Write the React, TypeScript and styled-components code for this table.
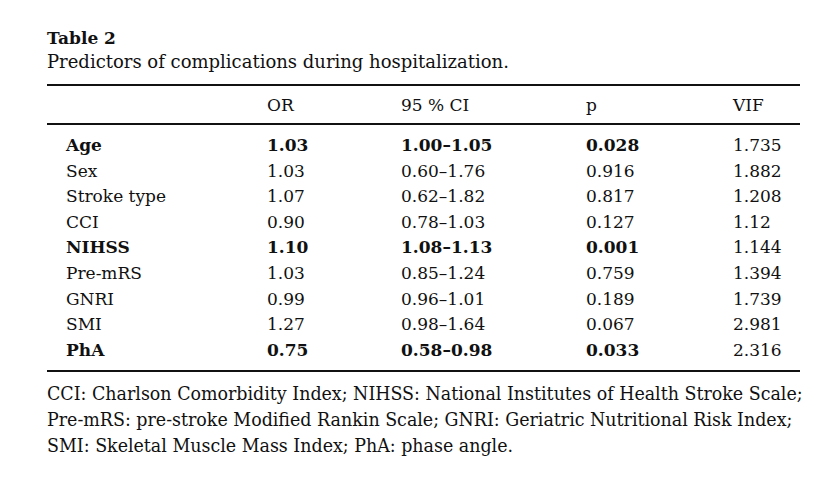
import React from "react";
import styled, { createGlobalStyle } from "styled-components";

const GlobalStyle = createGlobalStyle`
  html, body {
    margin: 0;
    padding: 0;
    background: #ffffff;
  }
  body {
    font-family: "DejaVu Serif", "Liberation Serif", serif;
    color: #111111;
  }
`;

const Page = styled.div`
  width: 814px;
  height: 487px;
  box-sizing: border-box;
  padding: 28px 14px 0 47px;
`;

const Title = styled.div`
  font-weight: bold;
  font-size: 17px;
  line-height: 21px;
`;

const Caption = styled.div`
  font-size: 18px;
  line-height: 26px;
  margin-bottom: 9px;
`;

const Table = styled.table`
  width: 753px;
  border-collapse: collapse;
  font-size: 17px;
  border-top: 2px solid #111;
  border-bottom: 2px solid #111;
`;

const HeadRow = styled.tr`
  border-bottom: 2px solid #111;
  th {
    height: 37px;
    font-weight: normal;
    text-align: left;
    padding: 0;
  }
`;

const Body = styled.tbody`
  tr:first-child td {
    padding-top: 8px;
  }
  tr:last-child td {
    padding-bottom: 7px;
  }
`;

const Cell = styled.td<{ $bold?: boolean }>`
  padding: 0;
  height: 25.6px;
  line-height: 25.6px;
  font-weight: ${(p) => (p.$bold ? "bold" : "normal")};
  white-space: nowrap;
`;

const Notes = styled.div`
  margin-top: 9px;
  font-family: "DejaVu Serif Condensed", "DejaVu Serif", serif;
  font-stretch: condensed;
  font-size: 19.4px;
  line-height: 26px;
  white-space: nowrap;
`;

const cols = ["19px", "201px", "134px", "185px", "147px", "67px"];

const rows: { name: string; or: string; ci: string; p: string; vif: string; bold?: boolean }[] = [
  { name: "Age", or: "1.03", ci: "1.00–1.05", p: "0.028", vif: "1.735", bold: true },
  { name: "Sex", or: "1.03", ci: "0.60–1.76", p: "0.916", vif: "1.882" },
  { name: "Stroke type", or: "1.07", ci: "0.62–1.82", p: "0.817", vif: "1.208" },
  { name: "CCI", or: "0.90", ci: "0.78–1.03", p: "0.127", vif: "1.12" },
  { name: "NIHSS", or: "1.10", ci: "1.08–1.13", p: "0.001", vif: "1.144", bold: true },
  { name: "Pre-mRS", or: "1.03", ci: "0.85–1.24", p: "0.759", vif: "1.394" },
  { name: "GNRI", or: "0.99", ci: "0.96–1.01", p: "0.189", vif: "1.739" },
  { name: "SMI", or: "1.27", ci: "0.98–1.64", p: "0.067", vif: "2.981" },
  { name: "PhA", or: "0.75", ci: "0.58–0.98", p: "0.033", vif: "2.316", bold: true },
];

export default function App() {
  return (
    <>
      <GlobalStyle />
      <Page>
        <Title>Table 2</Title>
        <Caption>Predictors of complications during hospitalization.</Caption>
        <Table>
          <colgroup>
            {cols.map((w, i) => (
              <col key={i} style={{ width: w }} />
            ))}
          </colgroup>
          <thead>
            <HeadRow>
              <th />
              <th />
              <th>OR</th>
              <th>95 % CI</th>
              <th>p</th>
              <th>VIF</th>
            </HeadRow>
          </thead>
          <Body>
            {rows.map((r) => (
              <tr key={r.name}>
                <Cell />
                <Cell $bold={r.bold}>{r.name}</Cell>
                <Cell $bold={r.bold}>{r.or}</Cell>
                <Cell $bold={r.bold}>{r.ci}</Cell>
                <Cell $bold={r.bold}>{r.p}</Cell>
                <Cell>{r.vif}</Cell>
              </tr>
            ))}
          </Body>
        </Table>
        <Notes>
          CCI: Charlson Comorbidity Index; NIHSS: National Institutes of Health Stroke Scale;
          <br />
          Pre-mRS: pre-stroke Modified Rankin Scale; GNRI: Geriatric Nutritional Risk Index;
          <br />
          SMI: Skeletal Muscle Mass Index; PhA: phase angle.
        </Notes>
      </Page>
    </>
  );
}
